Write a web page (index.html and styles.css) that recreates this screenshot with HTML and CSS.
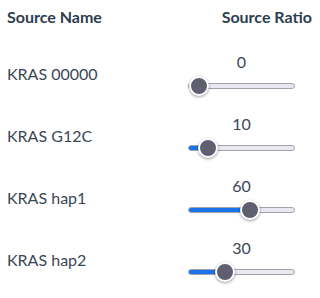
FILE: index.html
```html
<!DOCTYPE html>
<html lang="en">
<head>
  <meta charset="UTF-8">
  <meta name="viewport" content="width=device-width, initial-scale=1.0">
  <title>Source Ratios</title>
  <link rel="stylesheet" href="styles.css">
</head>
<body>

  <div class="table">
    <div class="head-row">
      <div class="head">Source Name</div>
      <div class="head head-right">Source Ratio</div>
    </div>

    <div class="row">
      <div class="name">KRAS 00000</div>
      <div class="ratio">
        <div class="value">0</div>
        <input type="range" class="slider" min="0" max="100" value="0" style="--pct: 0%">
      </div>
    </div>

    <div class="row">
      <div class="name">KRAS G12C</div>
      <div class="ratio">
        <div class="value">10</div>
        <input type="range" class="slider" min="0" max="100" value="10" style="--pct: 10%">
      </div>
    </div>

    <div class="row">
      <div class="name">KRAS hap1</div>
      <div class="ratio">
        <div class="value">60</div>
        <input type="range" class="slider" min="0" max="100" value="60" style="--pct: 60%">
      </div>
    </div>

    <div class="row">
      <div class="name">KRAS hap2</div>
      <div class="ratio">
        <div class="value">30</div>
        <input type="range" class="slider" min="0" max="100" value="30" style="--pct: 30%">
      </div>
    </div>
  </div>

</body>
</html>
```

FILE: styles.css
```css
body {
  margin: 0;
  padding: 7px 8px 0 7px;
  font-family: Lato, "Open Sans", sans-serif;
  font-size: 16px;
  line-height: 20px;
  color: #3b4757;
  background: #ffffff;
}
.head-row {
  display: flex;
  justify-content: space-between;
  margin-bottom: 25px;
}
.head {
  font-weight: bold;
  color: #2c3e50;
}
.row {
  display: flex;
  align-items: center;
  justify-content: space-between;
  margin-bottom: 18px;
}
.name {
  flex: 1;
}
.ratio {
  width: 124px;
  display: flex;
  flex-direction: column;
}
.value {
  width: 107px;
  text-align: center;
  margin-bottom: 4px;
}
.slider {
  -webkit-appearance: none;
  appearance: none;
  width: 107px;
  height: 20px;
  margin: 0;
  padding: 0;
  background: transparent;
}
.slider::-webkit-slider-runnable-track {
  height: 6px;
  border: 1px solid #a3a3b0;
  border-radius: 4px;
  box-sizing: border-box;
  background: linear-gradient(to right, #1a73e8 0, #1a73e8 calc(10px + (100% - 20px) * var(--pct) / 100%), #e8e8f0 0);
}
.slider::-webkit-slider-thumb {
  -webkit-appearance: none;
  width: 20px;
  height: 20px;
  margin-top: -8px;
  border-radius: 50%;
  border: 2px solid #ffffff;
  box-sizing: border-box;
  background: #5f5f6f;
  box-shadow: 0 1px 3px rgba(0, 0, 0, 0.4);
}
```
